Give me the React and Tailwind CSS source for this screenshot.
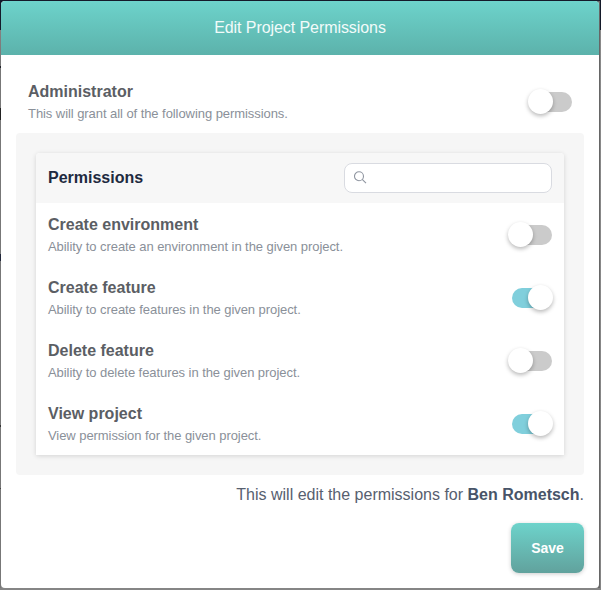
import React from "react";

const permissions = [
  { name: "Create environment", detail: "Ability to create an environment in the given project.", on: false },
  { name: "Create feature", detail: "Ability to create features in the given project.", on: true },
  { name: "Delete feature", detail: "Ability to delete features in the given project.", on: false },
  { name: "View project", detail: "View permission for the given project.", on: true },
];

function Switch({ on, label }) {
  return (
    <button
      type="button"
      role="switch"
      aria-checked={on}
      aria-label={label}
      className={`mt-[22px] flex h-5 w-10 shrink-0 items-start rounded-full ${on ? "justify-end bg-[#80cfdc]" : "justify-start bg-[#cbcbcb]"}`}
    >
      <span
        className={`-mt-[3px] size-[25px] shrink-0 rounded-full bg-white shadow-[0_2px_4px_rgba(0,0,0,0.28)] ${on ? "-mr-[1px]" : "-ml-[4px]"}`}
      />
    </button>
  );
}

function PermissionRow({ name, detail, on }) {
  return (
    <div className="flex h-[63px] justify-between px-3">
      <div className="pt-[11px]">
        <div className="text-[16px] leading-[22px] font-bold text-[#5b5e64]">{name}</div>
        <div className="mt-px text-[13px] leading-[20px] tracking-[-0.065px] text-[#8a9099]">{detail}</div>
      </div>
      <Switch on={on} label={name} />
    </div>
  );
}

export default function App() {
  return (
    <div className="flex h-[590px] w-[601px] flex-col overflow-hidden bg-[linear-gradient(#141a2a_30px,#8a8a8a_30px,#858585_590px)] pt-px font-['Liberation_Sans',Arial,sans-serif]">
      <div className="flex h-[587px] bg-[linear-gradient(to_right,transparent_598px,#666_598px,#666_600px,transparent_600px)]">
        <div className="-mt-px h-[588px] w-px shrink-0 bg-[linear-gradient(#141a2a_30px,#858080_30px,#777_66px,#20232b_66px,#20232b_68px,#777_68px,#777_108px,#222_108px,#222_120px,#777_120px,#777_254px,#20263a_254px,#20263a_261px,#777_261px,#777_425px,#333_425px,#333_427px,#777_427px,#777_488px,#444_488px,#444_489px,#777_489px)]" />
        <div className="flex w-[598px] shrink-0 flex-col overflow-hidden rounded-[4px] bg-white">
          <header className="flex h-[54px] shrink-0 items-center justify-center bg-linear-to-b from-[#6dd3cb] to-[#5cb2ab] text-[16px] tracking-[-0.07px] text-[#f2fbfa]">
            Edit Project Permissions
          </header>
          <main className="flex flex-col px-[15px] pt-[15px]">
            <PermissionRow name="Administrator" detail="This will grant all of the following permissions." on={false} />
            <section className="rounded-[4px] bg-[#f6f6f6] p-5">
              <div className="rounded-t-[4px] bg-white shadow-[0_1px_5px_rgba(0,0,0,0.14)]">
                <div className="flex h-[50px] items-center justify-between rounded-t-[4px] bg-[#f7f7f7] px-3">
                  <h2 className="text-[16px] font-bold text-[#1e2a40]">Permissions</h2>
                  <label className="flex h-[30px] w-[208px] items-center rounded-[8px] border border-[#d9dbe1] bg-white pl-[9px]">
                    <svg width="13" height="13" viewBox="0 0 13 13" fill="none" stroke="#8f95a0" strokeWidth="1.1" className="-mt-[2px] shrink-0">
                      <circle cx="5" cy="5.2" r="4.5" />
                      <path d="M8.2 8.4 12 12.2" />
                    </svg>
                    <input aria-label="Search permissions" className="min-w-0 flex-1 bg-transparent px-2 text-[14px] outline-none" />
                  </label>
                </div>
                {permissions.map((permission) => (
                  <PermissionRow key={permission.name} {...permission} />
                ))}
              </div>
            </section>
            <p className="mt-[9px] text-right text-[16px] leading-[22px] text-[#57606f]">
              This will edit the permissions for <strong className="text-[#485468]">Ben Rometsch</strong>.
            </p>
            <button
              type="button"
              className="mt-[17px] h-[50px] w-[73px] self-end rounded-[8px] bg-linear-to-b from-[#6dd3cb] to-[#61a29d] text-[14px] font-bold text-white shadow-[0_1px_4px_rgba(0,0,0,0.2)]"
            >
              Save
            </button>
          </main>
        </div>
      </div>
    </div>
  );
}
